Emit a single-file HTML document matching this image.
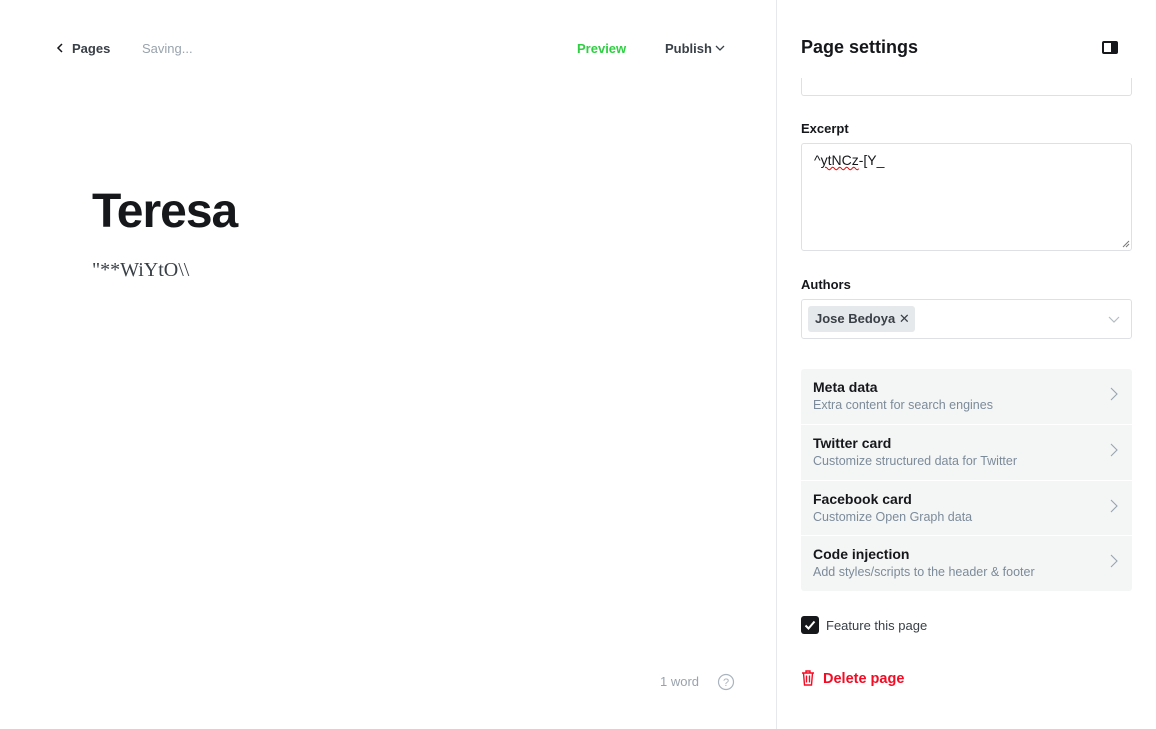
<!DOCTYPE html>
<html><head><meta charset="utf-8"><style>
*{box-sizing:border-box;margin:0;padding:0}
body{width:1156px;height:729px;position:relative;background:#fff;font-family:"Liberation Sans",sans-serif;color:#15171a;overflow:hidden}
.a{position:absolute}
.b{font-weight:bold}
.row{position:absolute;left:801px;width:331px;height:55px;background:#f4f5f5}
.row .t{position:absolute;left:12px;top:10px;font-size:14px;font-weight:bold;color:#15171a}
.row .s{position:absolute;left:12px;top:29px;font-size:12.5px;color:#7c8b9a}
.row svg{position:absolute;right:14px;top:18px}
</style></head><body>
<svg class="a" style="left:56px;top:43px" width="8" height="10" viewBox="0 0 8 10"><path d="M6 1L2 5l4 4" fill="none" stroke="#15171a" stroke-width="1.5"/></svg>
<div class="a b" style="left:72px;top:41px;font-size:13px;color:#394047">Pages</div>
<div class="a" style="left:142px;top:41px;font-size:13px;color:#99a3ad">Saving...</div>
<div class="a b" style="left:577px;top:41px;font-size:13px;color:#30cf43">Preview</div>
<div class="a b" style="left:665px;top:41px;font-size:13px;color:#394047">Publish</div>
<svg class="a" style="left:715px;top:45px" width="10" height="7" viewBox="0 0 10 7"><path d="M1 1l4 4 4-4" fill="none" stroke="#394047" stroke-width="1.3"/></svg>
<div class="a b" style="left:92px;top:184px;font-size:48px;letter-spacing:-1px;color:#15171a">Teresa</div>
<div class="a" style="left:92px;top:259px;font-size:20px;font-family:'Liberation Serif',serif;color:#394047">"**WiYtO\\</div>
<div class="a" style="left:660px;top:674px;font-size:13px;color:#99a3ad">1 word</div>
<svg class="a" style="left:717px;top:673px" width="18" height="18" viewBox="0 0 18 18"><circle cx="9" cy="9" r="7.5" fill="none" stroke="#abb4be" stroke-width="1.2"/><text x="9" y="13" font-size="11" text-anchor="middle" fill="#abb4be" font-family="Liberation Sans">?</text></svg>
<div class="a" style="left:776px;top:0;width:1px;height:729px;background:#e6e9eb"></div>
<div class="a b" style="left:801px;top:37px;font-size:18px;color:#15171a">Page settings</div>
<div class="a" style="left:1102px;top:41px;width:16px;height:13px;border:2px solid #15171a;border-radius:2px"><div style="position:absolute;right:0;top:0;width:5px;height:9px;background:#15171a"></div></div>
<div class="a" style="left:801px;top:78px;width:331px;height:18px;border:1px solid #dde1e5;border-top:none;border-radius:0 0 3px 3px"></div>
<div class="a b" style="left:801px;top:121px;font-size:13px">Excerpt</div>
<div class="a" style="left:801px;top:143px;width:331px;height:108px;border:1px solid #dde1e5;border-radius:3px"></div>
<div class="a" style="left:814px;top:152px;font-size:14px;color:#15171a">^<span style="text-decoration:underline wavy #e00;text-decoration-thickness:1px">ytNCz</span>-[Y_</div>
<svg class="a" style="left:1122px;top:240px" width="8" height="8"><path d="M1 7L7 1M4 7L7 4" stroke="#777" stroke-width="1"/></svg>
<div class="a b" style="left:801px;top:277px;font-size:13px">Authors</div>
<div class="a" style="left:801px;top:299px;width:331px;height:40px;border:1px solid #dde1e5;border-radius:3px"></div>
<div class="a" style="left:808px;top:306px;width:107px;height:26px;background:#e6e9eb;border-radius:3px;font-size:13px;color:#394047;padding:5px 0 0 7px"><b>Jose Bedoya</b> ✕</div>
<svg class="a" style="left:1108px;top:316px" width="12" height="7" viewBox="0 0 12 7"><path d="M1 1l5 5 5-5" fill="none" stroke="#b5bdc4" stroke-width="1.2"/></svg>
<div class="row" style="top:369px;border-radius:3px 3px 0 0"><div class="t">Meta data</div><div class="s">Extra content for search engines</div><svg width="8" height="14" viewBox="0 0 8 14"><path d="M1 1l6 6-6 6" fill="none" stroke="#9aa5b0" stroke-width="1.1"/></svg></div>
<div class="row" style="top:425px"><div class="t">Twitter card</div><div class="s">Customize structured data for Twitter</div><svg width="8" height="14" viewBox="0 0 8 14"><path d="M1 1l6 6-6 6" fill="none" stroke="#9aa5b0" stroke-width="1.1"/></svg></div>
<div class="row" style="top:481px;height:54px"><div class="t">Facebook card</div><div class="s">Customize Open Graph data</div><svg width="8" height="14" viewBox="0 0 8 14"><path d="M1 1l6 6-6 6" fill="none" stroke="#9aa5b0" stroke-width="1.1"/></svg></div>
<div class="row" style="top:536px;border-radius:0 0 3px 3px"><div class="t">Code injection</div><div class="s">Add styles/scripts to the header &amp; footer</div><svg width="8" height="14" viewBox="0 0 8 14"><path d="M1 1l6 6-6 6" fill="none" stroke="#9aa5b0" stroke-width="1.1"/></svg></div>
<div class="a" style="left:801px;top:616px;width:18px;height:18px;background:#15171a;border-radius:3px"><svg width="18" height="18" viewBox="0 0 18 18"><path d="M4.5 9.5l3 3 6-7" fill="none" stroke="#fff" stroke-width="2"/></svg></div>
<div class="a" style="left:826px;top:618px;font-size:13px;color:#394047">Feature this page</div>
<svg class="a" style="left:801px;top:670px" width="14" height="16" viewBox="0 0 14 16"><path d="M1 3h12M5 3V1h4v2M2.5 3l1 12h7l1-12M5.5 5.5v7M8.5 5.5v7" fill="none" stroke="#f50b23" stroke-width="1.4"/></svg>
<div class="a b" style="left:823px;top:671px;font-size:14.5px;color:#f50b23">Delete page</div>
</body></html>
